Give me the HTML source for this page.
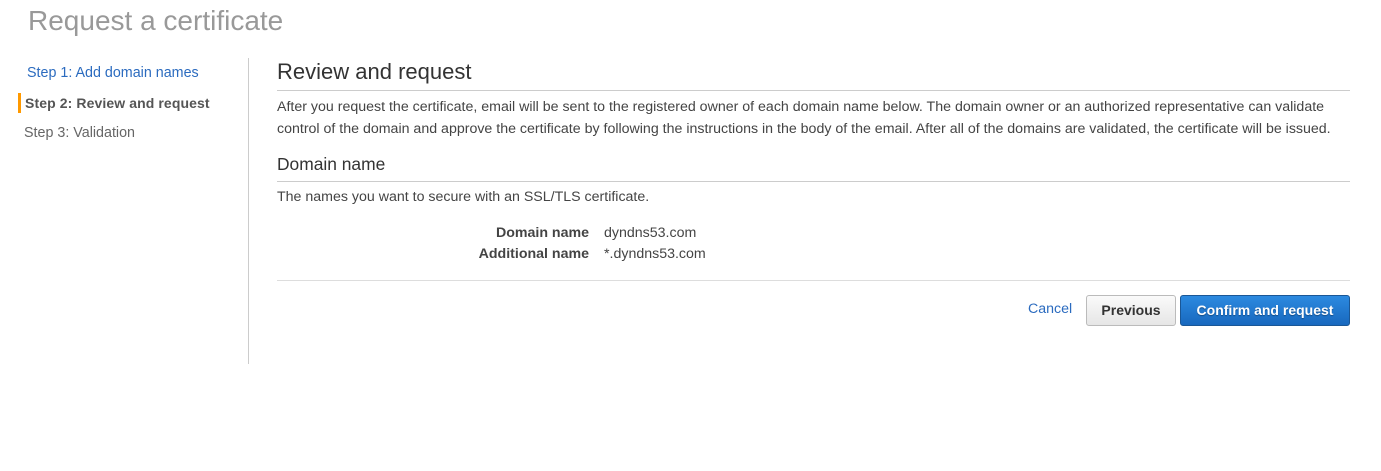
<!DOCTYPE html>
<html><head><meta charset="utf-8"><style>
body{margin:0;width:1381px;height:471px;background:#fff;font-family:"Liberation Sans",Arial,sans-serif;color:#444;position:relative;overflow:hidden}
.a{position:absolute;white-space:nowrap}
</style></head><body>
<div class="a" style="left:28px;top:5px;font-size:28px;color:#999">Request a certificate</div>
<div class="a" style="left:27px;top:65px;font-size:14.3px;color:#2b6bbf">Step 1: Add domain names</div>
<div class="a" style="left:18px;top:93px;width:3px;height:20px;background:#f90"></div>
<div class="a" style="left:25px;top:95px;font-size:14px;font-weight:bold;color:#555;letter-spacing:0.1px">Step 2: Review and request</div>
<div class="a" style="left:24px;top:125px;font-size:14.3px;color:#666">Step 3: Validation</div>
<div class="a" style="left:248px;top:58px;width:1px;height:306px;background:#ccc"></div>
<div class="a" style="left:277px;top:59px;font-size:22px;color:#333">Review and request</div>
<div class="a" style="left:277px;top:90px;width:1073px;height:1px;background:#ccc"></div>
<div class="a" style="left:277px;top:96px;font-size:14.2px;line-height:22px;color:#444;white-space:normal;width:1075px">After you request the certificate, email will be sent to the registered owner of each domain name below. The domain owner or an authorized representative can validate control of the domain and approve the certificate by following the instructions in the body of the email. After all of the domains are validated, the certificate will be issued.</div>
<div class="a" style="left:277px;top:154px;font-size:17.4px;color:#333">Domain name</div>
<div class="a" style="left:277px;top:181px;width:1073px;height:1px;background:#ccc"></div>
<div class="a" style="left:277px;top:189px;font-size:14.2px">The names you want to secure with an SSL/TLS certificate.</div>
<div class="a" style="left:400px;width:189px;text-align:right;top:225px;font-size:14.2px;font-weight:bold;color:#444">Domain name</div>
<div class="a" style="left:604px;top:225px;font-size:14.2px">dyndns53.com</div>
<div class="a" style="left:400px;width:189px;text-align:right;top:246px;font-size:14.2px;font-weight:bold;color:#444">Additional name</div>
<div class="a" style="left:604px;top:246px;font-size:14.2px">*.dyndns53.com</div>
<div class="a" style="left:277px;top:280px;width:1073px;height:1px;background:#ddd"></div>
<div class="a" style="left:1028px;top:301px;font-size:14.2px;color:#2b6bbf">Cancel</div>
<div class="a" style="left:1086px;top:295px;width:88px;height:29px;border:1px solid #bbb;border-radius:3px;background:linear-gradient(#fafafa,#e6e6e6);font-size:14px;font-weight:bold;color:#333;text-align:center;line-height:29px">Previous</div>
<div class="a" style="left:1180px;top:295px;width:168px;height:29px;border:1px solid #1a5796;border-radius:3px;background:linear-gradient(#2c8ae0,#1868be);font-size:14px;font-weight:bold;color:#fff;text-align:center;line-height:29px;text-shadow:0 1px 1px #124c87">Confirm and request</div>
</body></html>
